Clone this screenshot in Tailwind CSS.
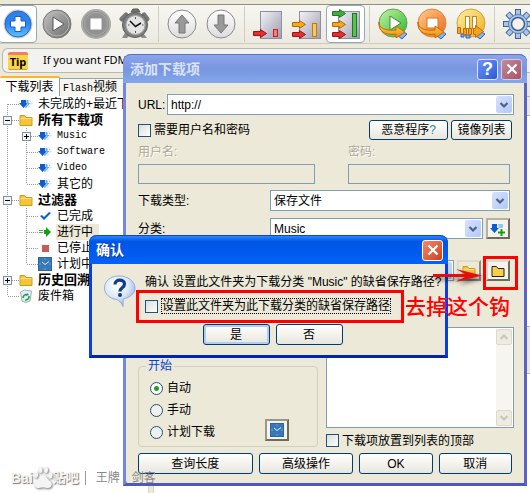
<!DOCTYPE html>
<html lang="zh-CN">
<head>
    <meta charset="UTF-8">
    <meta name="viewport" content="width=device-width, initial-scale=1.0">
    <title>Free Download Manager - 添加下载项</title>
    <script src="https://cdn.jsdelivr.net/npm/@tailwindcss/browser@4"></script>
</head>
<body class="relative h-screen overflow-hidden bg-[#ece9d8] font-['Liberation_Sans','Noto_Sans_CJK_SC',sans-serif] text-xs text-black">

    <!-- shared icons -->
    <svg class="absolute size-0">
        <defs>
            <linearGradient id="gBlue" x1="0" y1="0" x2="0" y2="1"><stop offset="0" stop-color="#2f7fe8"/><stop offset=".5" stop-color="#2b86f0"/><stop offset="1" stop-color="#5cc4ff"/></linearGradient>
            <linearGradient id="gGrey" x1="0" y1="0" x2="1" y2="1"><stop offset="0" stop-color="#c4c4c4"/><stop offset="1" stop-color="#6b6b6b"/></linearGradient>
            <linearGradient id="gWhite" x1="0" y1="0" x2="0" y2="1"><stop offset="0" stop-color="#ffffff"/><stop offset="1" stop-color="#dcdcdc"/></linearGradient>
            <linearGradient id="gGreen" x1="0" y1="0" x2="1" y2="1"><stop offset="0" stop-color="#c5f5a8"/><stop offset="1" stop-color="#2fb52a"/></linearGradient>
            <linearGradient id="gOrange" x1="0" y1="0" x2="1" y2="1"><stop offset="0" stop-color="#ffd08a"/><stop offset="1" stop-color="#f0641e"/></linearGradient>
            <linearGradient id="gYellow" x1="0" y1="0" x2="1" y2="1"><stop offset="0" stop-color="#fff0a8"/><stop offset="1" stop-color="#efae1c"/></linearGradient>
            <linearGradient id="gPanel" x1="0" y1="0" x2="1" y2="1"><stop offset="0" stop-color="#f2f2f6"/><stop offset="1" stop-color="#9c9cae"/></linearGradient>
            <linearGradient id="gSwoosh" x1="0" y1="0" x2="0" y2="1"><stop offset="0" stop-color="#ffd84a"/><stop offset="1" stop-color="#f08c10"/></linearGradient>
            <radialGradient id="gBubble" cx=".4" cy=".3" r=".8"><stop offset="0" stop-color="#ffffff"/><stop offset=".5" stop-color="#dbe9fb"/><stop offset="1" stop-color="#7ba2d8"/></radialGradient>
        </defs>
        <symbol id="guide-top" viewBox="0 0 19 16"><path d="M7.500 8v8M8 8.500h11" stroke="#999" stroke-dasharray="1 1" fill="none"/></symbol>
        <symbol id="guide-line" viewBox="0 0 19 16"><path d="M7.500 0v16" stroke="#999" stroke-dasharray="1 1" fill="none"/></symbol>
        <symbol id="guide-tee" viewBox="0 0 19 16"><path d="M7.500 0v16M8 8.500h11" stroke="#999" stroke-dasharray="1 1" fill="none"/></symbol>
        <symbol id="guide-end" viewBox="0 0 19 16"><path d="M7.500 0v8M8 8.500h11" stroke="#999" stroke-dasharray="1 1" fill="none"/></symbol>
        <symbol id="guide-minus" viewBox="0 0 19 16"><path d="M7.500 0v16M8 8.500h11" stroke="#999" stroke-dasharray="1 1" fill="none"/><rect x="3.500" y="4.500" width="8" height="8" fill="#f4f3ee" stroke="#7b8fae"/><path d="M5 8.500h5" stroke="#000"/></symbol>
        <symbol id="guide-plus" viewBox="0 0 19 16"><path d="M7.500 0v16M8 8.500h11" stroke="#999" stroke-dasharray="1 1" fill="none"/><rect x="3.500" y="4.500" width="8" height="8" fill="#f4f3ee" stroke="#7b8fae"/><path d="M5 8.500h5M7.500 6v5" stroke="#000"/></symbol>
        <symbol id="i-down" viewBox="0 0 14 12"><path d="M2 2h5v3h2L4.500 10 0 5h2z" fill="#0a5fd0"/><path d="M7.500 2h2v3h2l-4.500 5-1.500-1L9 6H7.500z" fill="#6ea8ee"/><path d="M10.500 2h1v3h2L9 10" fill="none" stroke="#a9c9f4" stroke-dasharray="1 1"/></symbol>
        <symbol id="i-folder" viewBox="0 0 14 12"><path d="M1 1.500h4.500l1.500 2h6v8H1z" fill="#f3c63a" stroke="#d09a18"/><path d="M1.500 4.500h11" stroke="#fbe391"/></symbol>
        <symbol id="i-check" viewBox="0 0 14 12"><path d="M2 6l2-1 2 2 5-5 2 1-7 7z" fill="#0b62d6"/></symbol>
        <symbol id="i-go" viewBox="0 0 14 12"><path d="M6 4h2V1l5 5-5 5V8H6z" fill="#12a012"/><path d="M2 4v4M4 4v4" stroke="#12a012" stroke-width="1.500" stroke-dasharray="1 1"/></symbol>
        <symbol id="i-stop" viewBox="0 0 14 12"><rect x="4" y="3" width="7" height="7" fill="#c85a5a"/></symbol>
        <symbol id="i-sched" viewBox="0 0 14 14"><rect x=".5" y=".5" width="13" height="13" fill="#3878b8" stroke="#2b66a4"/><path d="M4 5l3 2.500 4-3" stroke="#dfeefa" fill="none"/><path d="M7 1.500v1M7 11.500v1M1.500 7h1M11.500 7h1" stroke="#a9cbe8"/></symbol>
        <symbol id="i-bin" viewBox="0 0 14 14"><path d="M1.500 3l4-2 7 1-1.500 10-4 1.500L3 12z" fill="#e4eef2" stroke="#9db0ba"/><path d="M4 9a3.500 3.500 0 0 1 4-3.500M10 7a3.500 3.500 0 0 1-4 4" stroke="#2ba33a" stroke-width="1.600" fill="none"/><path d="M8 4l2 2-3 1z" fill="#2c7fd0"/></symbol>
        <symbol id="i-chev" viewBox="0 0 10 8"><path d="M1.500 2L5 5.500 8.500 2" fill="none" stroke="#4d6185" stroke-width="2.200"/></symbol>
        <symbol id="i-arrow-r" viewBox="0 0 14 9"><path d="M.5 2.500h7V.5l6 4-6 4v-2h-7z"/></symbol>
        <symbol id="i-swoosh" viewBox="0 0 32 32"><path d="M20 27l5-4 5 3-5 5z" fill="#7fb4f4" stroke="#2b62c4"/><path d="M2 14c0 6 6 9 17 8v-4l9 6-9 6v-4C8 28 1 23 2 14z" fill="url(#gSwoosh)" stroke="#c46a08"/></symbol>
    </svg>

    <div class="flex h-full flex-col">
        <!-- toolbar -->
        <div class="h-1"></div>
        <div class="flex h-10 shrink-0 items-center border-t border-b border-t-[#8e8c80] border-b-[#cfccbf] bg-linear-to-b from-[#f7f6f1] to-[#ebe9e0]">
            <button aria-label="添加下载" class="-ml-0.5 flex h-[38px] w-[39px] shrink-0 items-center justify-center rounded border border-[#8fa9bf] bg-white">
                <svg class="size-8" viewBox="0 0 32 32"><circle cx="16" cy="16" r="14.500" fill="#cfcfcf"/><circle cx="16" cy="16" r="13" fill="url(#gBlue)" stroke="#2a66c8"/><path d="M13 8.500h6V13h4.500v6H19v4.500h-6V19H8.500v-6H13z" fill="#fff" stroke="#1d5cc0"/></svg>
            </button>
            <button aria-label="开始" class="flex w-[39px] shrink-0 justify-center">
                <svg class="size-8" viewBox="0 0 32 32"><circle cx="16" cy="16" r="14" fill="url(#gGrey)" stroke="#777"/><circle cx="16" cy="16" r="12" fill="none" stroke="#b4b4b4"/><path d="M12 9l11 7-11 7z" fill="#fff" stroke="#555"/></svg>
            </button>
            <button aria-label="停止" class="flex w-[39px] shrink-0 justify-center">
                <svg class="size-8" viewBox="0 0 32 32"><circle cx="16" cy="16" r="14" fill="#929292" stroke="#aaa" stroke-width="2"/><circle cx="16" cy="16" r="11.500" fill="none" stroke="#a9a9a9"/><rect x="10.500" y="10.500" width="11" height="11" fill="#fff"/></svg>
            </button>
            <button aria-label="计划" class="flex w-[39px] shrink-0 justify-center">
                <svg class="size-8" viewBox="0 0 32 32"><path d="M6 25l-3 5h5l3-3zM24 25l4 5h-5l-3-3z" fill="#8a8a8a"/><path d="M7 7L3 11M25 7l3 4" stroke="#777" stroke-width="5" stroke-linecap="round"/><path d="M12 4l2-3h5l2 3z" fill="#777" stroke="#555"/><circle cx="16" cy="17" r="12.500" fill="#808080" stroke="#5c5c5c"/><circle cx="16.500" cy="17" r="9.500" fill="#e4e4e4" stroke="#aaa"/><path d="M11 13l5.500 5.500L22 15" stroke="#111" stroke-width="1.500" fill="none"/><path d="M16.500 9v2M16.500 23v2M9 17h1.500M23 17h1.500" stroke="#555"/></svg>
            </button>
            <span class="flex h-[36px] w-2 shrink-0 justify-center"><i class="w-px bg-[#cfccc0]"></i></span>
            <button aria-label="上移" class="flex w-[39px] shrink-0 justify-center">
                <svg class="size-8" viewBox="0 0 32 32"><circle cx="16" cy="16" r="14" fill="url(#gWhite)" stroke="#8a8a8a"/><path d="M16 7l7 8h-4v10h-6V15H9z" fill="#999" stroke="#777"/></svg>
            </button>
            <button aria-label="下移" class="flex w-[39px] shrink-0 justify-center">
                <svg class="size-8" viewBox="0 0 32 32"><circle cx="16" cy="16" r="14" fill="url(#gWhite)" stroke="#8a8a8a"/><path d="M16 25l7-8h-4V7h-6v10H9z" fill="#999" stroke="#777"/></svg>
            </button>
            <span class="flex h-[36px] w-2 shrink-0 justify-center"><i class="w-px bg-[#cfccc0]"></i></span>
            <button aria-label="低速" class="flex w-[39px] shrink-0 justify-center">
                <svg class="size-8" viewBox="0 0 32 32"><rect x="8.500" y="3.500" width="21" height="27" fill="url(#gPanel)" stroke="#8f8fa4"/><rect x="21.500" y="21.500" width="4" height="7" fill="#f08080" stroke="#c81e1e"/><use href="#i-arrow-r" x="1" y="21" width="14" height="9" fill="#e23030" stroke="#9c1414"/></svg>
            </button>
            <button aria-label="中速" class="flex w-[39px] shrink-0 justify-center">
                <svg class="size-8" viewBox="0 0 32 32"><rect x="8.500" y="3.500" width="21" height="27" fill="url(#gPanel)" stroke="#8f8fa4"/><rect x="21.500" y="15.500" width="4" height="13" fill="#f8c860" stroke="#c07a10"/><use href="#i-arrow-r" x="1" y="12" width="14" height="9" fill="#f8a818" stroke="#b06a08"/><use href="#i-arrow-r" x="1" y="22" width="14" height="9" fill="#e23030" stroke="#9c1414"/></svg>
            </button>
            <button aria-label="高速" class="flex h-[38px] w-[39px] shrink-0 items-center justify-center rounded border border-[#8fa9bf] bg-white">
                <svg class="size-8" viewBox="0 0 32 32"><rect x="8.500" y="3.500" width="21" height="27" fill="url(#gPanel)" stroke="#8f8fa4"/><rect x="22.500" y="5.500" width="4" height="23" fill="#58c058" stroke="#1e7a1e"/><use href="#i-arrow-r" x="2" y="1" width="14" height="9" fill="#3fae3f" stroke="#1e7a1e"/><use href="#i-arrow-r" x="2" y="12" width="14" height="9" fill="#f8a818" stroke="#b06a08"/><use href="#i-arrow-r" x="2" y="22" width="14" height="9" fill="#e23030" stroke="#9c1414"/></svg>
            </button>
            <span class="flex h-[36px] w-2 shrink-0 justify-center"><i class="w-px bg-[#cfccc0]"></i></span>
            <button aria-label="全部开始" class="flex w-[39px] shrink-0 justify-center">
                <svg class="size-8" viewBox="0 0 32 32"><circle cx="16" cy="15" r="14" fill="url(#gGreen)" stroke="#6a9a5a"/><path d="M13 8l11 7-11 7z" fill="#fff" stroke="#3a8a30"/><use href="#i-swoosh" width="32" height="32"/></svg>
            </button>
            <button aria-label="全部停止" class="flex w-[39px] shrink-0 justify-center">
                <svg class="size-8" viewBox="0 0 32 32"><circle cx="16" cy="15" r="14" fill="url(#gOrange)" stroke="#d88a50"/><rect x="11" y="10" width="11" height="10" fill="#fff" stroke="#e07020"/><use href="#i-swoosh" width="32" height="32"/></svg>
            </button>
            <button aria-label="全部暂停" class="flex w-[39px] shrink-0 justify-center">
                <svg class="size-8" viewBox="0 0 32 32"><circle cx="16" cy="15" r="14" fill="url(#gYellow)" stroke="#d0a040"/><rect x="10.500" y="8.500" width="4" height="12" fill="#fff" stroke="#c08a20"/><rect x="17.500" y="8.500" width="4" height="12" fill="#fff" stroke="#c08a20"/><path d="M20 27l5-4 5 3-5 5zM6 26h3v3H6zM11 27h4v3h-4z" fill="#7fb4f4" stroke="#2b62c4"/><path d="M2.500 19.500h3v6h-3zM8.500 20.500h3v6h-3zM13.500 20.500h3v6h-3zM18.500 20.500h2v-3l8 6-8 6v-3h-2z" fill="#f8a020" stroke="#c46a08"/></svg>
            </button>
            <span class="flex h-[36px] w-2 shrink-0 justify-center"><i class="w-px bg-[#cfccc0]"></i></span>
            <button aria-label="设置" class="flex w-[39px] shrink-0 justify-center">
                <svg class="size-8" viewBox="0 0 32 32"><g stroke="#3f6290" stroke-width="6"><path d="M16 1v30M1 16h30M5.500 5.500l21 21M26.500 5.500l-21 21"/></g><g stroke="#a8c4ea" stroke-width="4"><path d="M16 2v28M2 16h28M6 6l20 20M26 6L6 26"/></g><circle cx="16" cy="16" r="9.500" fill="#a8c4ea" stroke="#5b80b4"/><circle cx="16" cy="16" r="6.500" fill="#f2f1ec" stroke="#3f6290" stroke-width="1.500"/></svg>
            </button>
        </div>

        <!-- tip of the day -->
        <div class="mt-1 ml-0.5 flex h-[25px] shrink-0 items-center gap-[15px] rounded-l-md border border-r-0 border-[#b9b8b0] bg-[#f2f2f1] pl-[5px]">
            <div class="flex h-[18px] w-5 items-center justify-center rounded-xs border-t-3 border-b border-t-[#ef7f63] border-b-[#d0a020] bg-[#fbd34c] font-['Open_Sans'] text-[11px] font-bold leading-none">Tip</div>
            <p class="font-['Noto_Sans'] text-[11px] whitespace-nowrap">If you want FDM</p>
        </div>

        <div class="mt-[3px] flex min-h-0 flex-1">
            <!-- left pane -->
            <div class="flex w-[148px] shrink-0 flex-col overflow-hidden">
                <div class="flex h-5 shrink-0 items-end">
                    <button class="h-5 w-[60px] shrink-0 rounded-t-xs border-t-2 border-r border-t-[#ffb22c] border-r-[#919b9c] bg-[#fcfcfa] leading-4">下载列表</button>
                    <button class="h-[18px] w-[88px] shrink-0 overflow-hidden border-t border-[#91a7b4] bg-[#f6f5f0] pl-[3px] text-left leading-4 whitespace-nowrap"><span class="font-['Liberation_Mono'] text-[10px]">Flash</span>视频</button>
                </div>
                <ul class="flex-1 bg-white whitespace-nowrap">
                    <li class="flex h-4 items-center"><svg class="h-4 w-[19px] shrink-0"><use href="#guide-top"/></svg><svg class="mr-[5px] h-3 w-3.5 shrink-0"><use href="#i-down"/></svg>未完成的+最近下</li>
                    <li class="flex h-4 items-center"><svg class="h-4 w-[19px] shrink-0"><use href="#guide-minus"/></svg><svg class="mr-[5px] h-3 w-3.5 shrink-0"><use href="#i-folder"/></svg><b class="text-[13px] leading-4">所有下载项</b></li>
                    <li class="flex h-4 items-center"><svg class="h-4 w-[19px] shrink-0"><use href="#guide-line"/></svg><svg class="h-4 w-[19px] shrink-0"><use href="#guide-plus"/></svg><svg class="mr-[5px] h-3 w-3.5 shrink-0"><use href="#i-down"/></svg><span class="font-['Liberation_Mono'] text-[10px]">Music</span></li>
                    <li class="flex h-4 items-center"><svg class="h-4 w-[19px] shrink-0"><use href="#guide-line"/></svg><svg class="h-4 w-[19px] shrink-0"><use href="#guide-tee"/></svg><svg class="mr-[5px] h-3 w-3.5 shrink-0"><use href="#i-down"/></svg><span class="font-['Liberation_Mono'] text-[10px]">Software</span></li>
                    <li class="flex h-4 items-center"><svg class="h-4 w-[19px] shrink-0"><use href="#guide-line"/></svg><svg class="h-4 w-[19px] shrink-0"><use href="#guide-tee"/></svg><svg class="mr-[5px] h-3 w-3.5 shrink-0"><use href="#i-down"/></svg><span class="font-['Liberation_Mono'] text-[10px]">Video</span></li>
                    <li class="flex h-4 items-center"><svg class="h-4 w-[19px] shrink-0"><use href="#guide-line"/></svg><svg class="h-4 w-[19px] shrink-0"><use href="#guide-end"/></svg><svg class="mr-[5px] h-3 w-3.5 shrink-0"><use href="#i-down"/></svg>其它的</li>
                    <li class="flex h-4 items-center"><svg class="h-4 w-[19px] shrink-0"><use href="#guide-minus"/></svg><svg class="mr-[5px] h-3 w-3.5 shrink-0"><use href="#i-folder"/></svg><b class="text-[13px] leading-4">过滤器</b></li>
                    <li class="flex h-4 items-center"><svg class="h-4 w-[19px] shrink-0"><use href="#guide-line"/></svg><svg class="h-4 w-[19px] shrink-0"><use href="#guide-tee"/></svg><svg class="mr-[5px] h-3 w-3.5 shrink-0"><use href="#i-check"/></svg>已完成</li>
                    <li class="flex h-4 items-center"><svg class="h-4 w-[19px] shrink-0"><use href="#guide-line"/></svg><svg class="h-4 w-[19px] shrink-0"><use href="#guide-tee"/></svg><svg class="mr-1 h-3 w-3.5 shrink-0"><use href="#i-go"/></svg><span class="bg-[#ece9d8] pr-1.5 pl-px leading-4">进行中</span></li>
                    <li class="flex h-4 items-center"><svg class="h-4 w-[19px] shrink-0"><use href="#guide-line"/></svg><svg class="h-4 w-[19px] shrink-0"><use href="#guide-tee"/></svg><svg class="mr-[5px] h-3 w-3.5 shrink-0"><use href="#i-stop"/></svg>已停止</li>
                    <li class="flex h-4 items-center"><svg class="h-4 w-[19px] shrink-0"><use href="#guide-line"/></svg><svg class="h-4 w-[19px] shrink-0"><use href="#guide-end"/></svg><svg class="mr-[5px] h-3.5 w-3.5 shrink-0"><use href="#i-sched"/></svg>计划中</li>
                    <li class="flex h-4 items-center"><svg class="h-4 w-[19px] shrink-0"><use href="#guide-plus"/></svg><svg class="mr-[5px] h-3 w-3.5 shrink-0"><use href="#i-folder"/></svg><b class="text-[13px] leading-4">历史回溯</b></li>
                    <li class="flex h-4 items-center"><svg class="h-4 w-[19px] shrink-0"><use href="#guide-end"/></svg><svg class="mr-[5px] h-3.5 w-3.5 shrink-0"><use href="#i-bin"/></svg>废件箱</li>
                </ul>
            </div>
            <div class="w-1.5 shrink-0 border-x border-[#d8d5c6]"></div>
            <!-- right pane, mostly behind the dialog -->
            <div class="flex flex-1 flex-col bg-white">
                <div class="h-5 bg-[#ece9d8]"></div>
                <div class="h-5 border-y border-[#b9b6a6] bg-[#ece9d8]"></div>
                <div class="h-[210px]"></div>
                <div class="h-12 border-y border-[#b9b6a6] bg-[#ece9d8]"></div>
            </div>
        </div>
    </div>

    <!-- add download dialog -->
    <section class="absolute top-[54px] right-[3px] left-[123px] rounded-t-lg border-x-3 border-b-3 border-[#7486de] border-r-[#5a63cc] border-b-[#4f57bd] bg-[#ece9d8]">
        <header class="-mx-[3px] flex h-[29px] items-center gap-[3px] rounded-t-lg border-t border-t-[#5a6fd0] bg-linear-to-b from-[#8ba4ea] via-[#7895e0] to-[#83a8ea] pr-[5px] pl-[7px]">
            <h2 class="flex-1 text-sm leading-5 font-bold text-[#d8e3fa]">添加下载项</h2>
            <button aria-label="帮助" class="flex size-[21px] items-center justify-center rounded-[3px] border border-[#dbe4fa] bg-linear-to-br from-[#6f93f2] to-[#2f57d8] text-lg leading-none font-bold text-white">?</button>
            <button aria-label="关闭" class="flex size-[21px] items-center justify-center rounded-[3px] border border-[#d8c9e4] bg-linear-to-br from-[#c08a9c] to-[#a85462]"><svg class="size-3" viewBox="0 0 12 12"><path d="M1.500 1.500l9 9M10.500 1.500l-9 9" stroke="#fff" stroke-width="2.200"/></svg></button>
        </header>
        <form class="pt-[11px] pr-2.5 pb-[9px] pl-3" onsubmit="return false">
            <div class="flex h-[21px] items-center">
                <label for="url" class="w-[29px]">URL:</label>
                <div class="flex h-full flex-1 items-center border border-[#7f9db9] bg-white p-px">
                    <input id="url" type="text" value="http://" class="h-full min-w-0 flex-1 pl-0.5 outline-none">
                    <span class="flex h-full w-4 items-center justify-center rounded-xs bg-linear-to-br from-[#d6e2fd] to-[#b3c8f7]"><svg class="h-2 w-2.5"><use href="#i-chev"/></svg></span>
                </div>
            </div>
            <div class="mt-[5px] flex h-5 items-center gap-[3px] pr-0.5">
                <input id="need-auth" type="checkbox" class="size-[13px] appearance-none border border-[#1c5180] bg-linear-to-br from-[#dcdcd7] to-white">
                <label for="need-auth" class="flex-1">需要用户名和密码</label>
                <button class="h-5 w-[79px] rounded-[3px] border border-[#003c74] bg-linear-to-b from-white to-[#e8e6dc] leading-4">恶意程序<span class="text-[#2a8a9a]">?</span></button>
                <button class="h-5 w-[61px] rounded-[3px] border border-[#003c74] bg-linear-to-b from-white to-[#e8e6dc] leading-4">镜像列表</button>
            </div>
            <div class="mt-1 grid grid-cols-[177px_1fr] gap-x-[33px] gap-y-1 pr-1 text-[#aca899]">
                <label for="user" class="leading-4 text-shadow-[1px_1px_0_#fff]">用户名:</label>
                <label for="pass" class="leading-4 text-shadow-[1px_1px_0_#fff]">密码:</label>
                <input id="user" type="text" disabled class="h-5 w-full border border-[#7f9db9]">
                <input id="pass" type="password" disabled class="h-5 w-full border border-[#7f9db9]">
            </div>
            <div class="mt-1.5 flex h-[21px] items-center pr-1">
                <label for="type" class="w-[132px]">下载类型:</label>
                <div class="flex h-full flex-1 items-center border border-[#7f9db9] bg-white p-px">
                    <select id="type" class="h-full min-w-0 flex-1 appearance-none pl-0.5 outline-none"><option>保存文件</option></select>
                    <span class="flex h-full w-4 items-center justify-center rounded-xs bg-linear-to-br from-[#d6e2fd] to-[#b3c8f7]"><svg class="h-2 w-2.5"><use href="#i-chev"/></svg></span>
                </div>
            </div>
            <div class="mt-[7px] flex h-[21px] items-center pr-1">
                <label for="category" class="w-[132px]">分类:</label>
                <div class="flex h-full flex-1 items-center border border-[#7f9db9] bg-white p-px">
                    <select id="category" class="h-full min-w-0 flex-1 appearance-none pl-0.5 outline-none"><option>Music</option></select>
                    <span class="flex h-full w-4 items-center justify-center rounded-xs bg-linear-to-br from-[#d6e2fd] to-[#b3c8f7]"><svg class="h-2 w-2.5"><use href="#i-chev"/></svg></span>
                </div>
                <button aria-label="新建分类" class="ml-[3px] flex h-[21px] w-6 items-center justify-center border-2 border-t-[#b5b2a2] border-r-[#6f6c5e] border-b-[#6f6c5e] border-l-[#b5b2a2] bg-[#f4f3ee]">
                    <svg class="h-4 w-4" viewBox="0 0 16 16"><path d="M2 3h5v4h2L4.500 12 0 7h2z" fill="#0a5fd0"/><path d="M8 3h5v4H9z" fill="#9cc2f2"/><path d="M11.500 7v8M7.500 11h8" stroke="#fff" stroke-width="4"/><path d="M11.500 8v7M8 11.500h7" stroke="#10a010" stroke-width="2"/></svg>
                </button>
            </div>
            <div class="mt-[21px] flex h-[21px] items-center gap-[3px] pr-1">
                <div class="flex h-full flex-1 items-center border border-[#7f9db9] bg-white p-px">
                    <select aria-label="保存到" class="h-full min-w-0 flex-1 appearance-none outline-none"></select>
                    <span class="flex h-full w-4 items-center justify-center rounded-xs bg-linear-to-br from-[#d6e2fd] to-[#b3c8f7]"><svg class="h-2 w-2.5"><use href="#i-chev"/></svg></span>
                </div>
                <button aria-label="默认目录" class="flex h-[21px] w-6 items-center justify-center border-2 border-t-[#dedbcb] border-r-[#8f8c7e] border-b-[#8f8c7e] border-l-[#dedbcb] bg-[#ece9d8]"><svg class="h-3 w-3.5"><use href="#i-folder"/></svg></button>
                <button aria-label="浏览" class="ml-0.5 flex h-[21px] w-6 items-center justify-center border-2 border-t-[#dedbcb] border-r-[#6f6c5e] border-b-[#6f6c5e] border-l-[#dedbcb] bg-[#f4f3ee]"><svg class="h-3 w-3.5" viewBox="0 0 14 12"><path d="M1 1.500h4.500l1.500 2h6v8H1z" fill="#f8d040" stroke="#222"/></svg></button>
            </div>
            <div class="mt-[46px] grid grid-cols-[180px_1fr] gap-2">
                <fieldset class="flex h-[88px] self-end rounded border border-[#d0d0bf] pr-7 pl-[11px]">
                    <legend class="-ml-1 px-0.5 leading-3.5 text-[#0046d5]">开始</legend>
                    <div class="flex flex-1 flex-col gap-1.5 pt-[7px]">
                        <label class="flex h-4 items-center gap-1"><input type="radio" name="start" checked class="size-[13px] appearance-none rounded-full border border-[#1c5180] bg-[#f0f0ec] checked:bg-[radial-gradient(circle,#21a121_0_2px,#fff_3px)]">自动</label>
                        <label class="flex h-4 items-center gap-1"><input type="radio" name="start" class="size-[13px] appearance-none rounded-full border border-[#1c5180] bg-[#f0f0ec]">手动</label>
                        <label class="flex h-4 items-center gap-1"><input type="radio" name="start" class="size-[13px] appearance-none rounded-full border border-[#1c5180] bg-[#f0f0ec]">计划下载</label>
                    </div>
                    <button aria-label="计划设置" class="mb-[5px] flex h-[22px] w-6 items-center justify-center self-end border-2 border-t-[#9b988a] border-r-[#6f6c5e] border-b-[#6f6c5e] border-l-[#9b988a] bg-[#f4f3ee]"><svg class="size-3.5"><use href="#i-sched"/></svg></button>
                </fieldset>
                <div class="flex flex-col">
                    <div class="flex h-[101px] border border-[#7f9db9] bg-white p-px">
                        <textarea aria-label="注释" class="min-w-0 flex-1 resize-none outline-none"></textarea>
                        <div class="flex w-4 flex-col justify-between bg-[#f6f5f0]">
                            <span class="flex h-4 items-center justify-center rounded-xs border border-[#dcd9cc] bg-[#eeece2]"><svg class="h-2 w-2.5" viewBox="0 0 10 8"><path d="M1.500 6L5 2.500 8.500 6" fill="none" stroke="#c9c7ba" stroke-width="2.200"/></svg></span>
                            <span class="flex h-4 items-center justify-center rounded-xs border border-[#dcd9cc] bg-[#eeece2]"><svg class="h-2 w-2.5" viewBox="0 0 10 8"><path d="M1.500 2L5 5.500 8.500 2" fill="none" stroke="#c9c7ba" stroke-width="2.200"/></svg></span>
                        </div>
                    </div>
                    <label class="mt-1.5 flex h-[13px] items-center gap-[3px]"><input type="checkbox" class="size-[13px] appearance-none border border-[#1c5180] bg-linear-to-br from-[#dcdcd7] to-white">下载项放置到列表的顶部</label>
                </div>
            </div>
            <div class="mt-1.5 grid h-[21px] grid-cols-[114fr_94fr_73fr_73fr] gap-1.5 pr-0.5">
                <button class="rounded-[3px] border border-[#003c74] bg-linear-to-b from-white to-[#e8e6dc] leading-4">查询长度</button>
                <button class="rounded-[3px] border border-[#003c74] bg-linear-to-b from-white to-[#e8e6dc] leading-4">高级操作</button>
                <button class="rounded-[3px] border border-[#003c74] bg-linear-to-b from-white to-[#e8e6dc] leading-4">OK</button>
                <button class="rounded-[3px] border border-[#003c74] bg-linear-to-b from-white to-[#e8e6dc] leading-4">取消</button>
            </div>
        </form>
    </section>

    <!-- confirmation -->
    <section class="absolute top-[235px] left-[89px] w-[359px] rounded-t-lg border-x-3 border-b-3 border-[#0a3fdc] border-b-[#0026b0] bg-[#ece9d8]">
        <header class="-mx-[3px] flex h-[29px] items-center rounded-t-lg border-t border-t-[#0a48c8] bg-linear-to-b from-[#2b86ff] via-[#0054e3] via-20% to-[#0062fa] pr-[5px] pl-[7px]">
            <h2 class="flex-1 text-sm leading-5 font-bold text-white text-shadow-[1px_1px_0_#0a2f90]">确认</h2>
            <button aria-label="关闭" class="flex size-[21px] items-center justify-center rounded-[3px] border border-white bg-linear-to-br from-[#ee8a6c] to-[#d03c14]"><svg class="size-3" viewBox="0 0 12 12"><path d="M1.500 1.500l9 9M10.500 1.500l-9 9" stroke="#fff" stroke-width="2.200"/></svg></button>
        </header>
        <div class="flex gap-[9px] pt-2.5 pl-[11px]">
            <svg class="h-[34px] w-[33px] shrink-0" viewBox="0 0 33 34"><path d="M16 2C7 2 1.500 7.500 1.500 14c0 6 5 10.500 12 11.500 3 1 5 3.500 6.500 7 .5-3-.2-5 .3-7.500C27 23.500 32 19.500 32 14 32 7.500 25 2 16 2z" fill="url(#gBubble)" stroke="#94aed4"/><path d="M12 10.500c0-6 9.500-5.500 9.500-.5 0 4-4.500 3.500-4.500 7.500" fill="none" stroke="#123a8c" stroke-width="3.200"/><circle cx="17" cy="21" r="2" fill="#123a8c"/></svg>
            <div class="flex flex-col whitespace-nowrap">
                <p class="leading-4">确认 设置此文件夹为下载分类 "Music" 的缺省保存路径?</p>
                <label class="mt-2 flex h-4 items-center gap-[3px]"><input type="checkbox" class="size-[13px] appearance-none border border-[#1c5180] bg-linear-to-br from-[#dcdcd7] to-white"><span class="border border-dotted border-black leading-3.5">设置此文件夹为此下载分类的缺省保存路径</span></label>
            </div>
        </div>
        <div class="flex justify-center gap-1.5 pt-2.5 pb-2.5 pl-2">
            <button class="h-[21px] w-[67px] rounded-[3px] border border-[#003c74] bg-linear-to-b from-white to-[#e8e6dc] leading-4 inset-ring-2 inset-ring-[#b4cbf4]">是</button>
            <button class="h-[21px] w-[67px] rounded-[3px] border border-[#003c74] bg-linear-to-b from-white to-[#e8e6dc] leading-4">否</button>
        </div>
    </section>

    <!-- red marks -->
    <div class="pointer-events-none absolute top-[290px] left-[136px] h-[33px] w-[268px] border-3 border-[#fe0000]"></div>
    <div class="pointer-events-none absolute top-[256px] left-[483px] h-[34px] w-[35px] border-3 border-[#fe0000]"></div>
    <svg class="pointer-events-none absolute top-[266px] left-[430px] h-5 w-[54px] drop-shadow-[2px_3px_2px_rgba(0,0,0,0.5)]" viewBox="0 0 54 20"><path d="M3 8h32l-9-5 26 6.500L26 16l9-5H3z" fill="#e80c0c"/></svg>
    <p class="pointer-events-none absolute top-[293px] left-[405px] font-['Noto_Sans_CJK_SC',sans-serif] text-[21px] leading-6 font-medium whitespace-nowrap text-[#fe0000]">去掉这个钩</p>

    <!-- watermark -->
    <div class="pointer-events-none absolute top-[464px] left-[11px] flex h-7 items-center text-sm font-bold whitespace-nowrap text-[#f4f4f4] text-shadow-[1px_1px_1px_#777]">
        <span>Bai</span>
        <svg class="h-6 w-5 drop-shadow-[1px_1px_1px_#777]" viewBox="0 0 20 24"><g fill="#f4f4f4"><ellipse cx="3" cy="9" rx="2" ry="3"/><ellipse cx="7.500" cy="4" rx="2" ry="3"/><ellipse cx="13" cy="4" rx="2" ry="3"/><ellipse cx="17.500" cy="9.500" rx="2" ry="3"/><path d="M10 9c3 0 4 4 7 6s2 7-2 7c-2 0-3-.5-5-.5S7 22 5 22c-4 0-5-5-2-7s4-6 7-6z"/></g></svg>
        <span class="text-[13px]">贴吧</span>
        <span class="mx-1.5 h-3.5 w-px bg-[#999]"></span>
        <span class="ml-1 text-xs font-normal text-[#888] text-shadow-none">王牌﹑剑客</span>
    </div>
</body>
</html>
